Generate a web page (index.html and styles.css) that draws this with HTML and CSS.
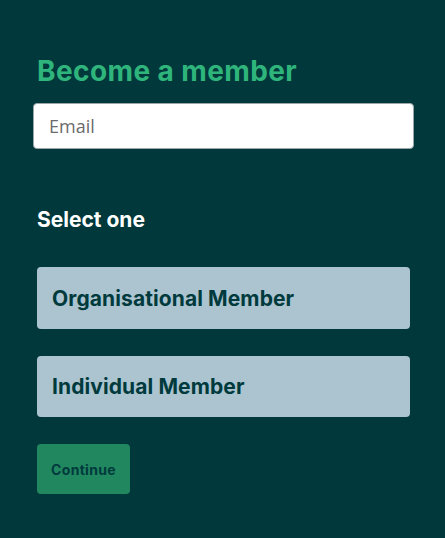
FILE: index.html
```html
<!DOCTYPE html>
<html>
<head>
<meta charset="utf-8">
<link rel="stylesheet" href="styles.css">
</head>
<body>
<div class="panel">
  <h1 class="title">Become a member</h1>
  <input class="email" type="text" placeholder="Email">
  <h2 class="subtitle">Select one</h2>
  <div class="options">
    <div class="option">Organisational Member</div>
    <div class="option">Individual Member</div>
  </div>
  <button class="continue">Continue</button>
</div>
</body>
</html>
```
FILE: styles.css
```css
html, body {
  margin: 0;
  padding: 0;
  background: #00383b;
  height: 100%;
}
.panel {
  padding: 53px 35px 0 37px;
  display: flex;
  flex-direction: column;
  font-family: Inter, "Liberation Sans", sans-serif;
}
.title {
  margin: 0;
  color: #2fb57c;
  font-size: 28px;
  font-weight: 700;
  letter-spacing: 0.4px;
  line-height: 36px;
}
.email {
  margin: 14px -4px 0 -4px;
  height: 46px;
  box-sizing: border-box;
  border: 1px solid #9aa6a8;
  border-radius: 4px;
  background: #fff;
  padding: 0 15px;
  font-family: "Open Sans", sans-serif;
  font-size: 18px;
  color: #333;
  outline: none;
}
.email::placeholder {
  color: #6b6b6b;
}
.subtitle {
  margin: 58px 0 0 0;
  color: #fff;
  font-size: 21px;
  font-weight: 700;
  letter-spacing: 0;
  line-height: 26px;
}
.options {
  margin-top: 34px;
  display: flex;
  flex-direction: column;
  gap: 27px;
}
.option {
  height: 62px;
  background: #abc4d0;
  border-radius: 4px;
  display: flex;
  align-items: center;
  padding-left: 15px;
  color: #003a3d;
  font-size: 21px;
  font-weight: 700;
  letter-spacing: 0.1px;
}
.option + .option {
  height: 61px;
}
.continue {
  margin-top: 27px;
  align-self: flex-start;
  width: 93px;
  height: 50px;
  background: #21875f;
  border: none;
  border-radius: 4px;
  color: #003a3d;
  font-family: Inter, "Liberation Sans", sans-serif;
  font-size: 14px;
  font-weight: 700;
  letter-spacing: 0.3px;
  padding: 0;
}
```
